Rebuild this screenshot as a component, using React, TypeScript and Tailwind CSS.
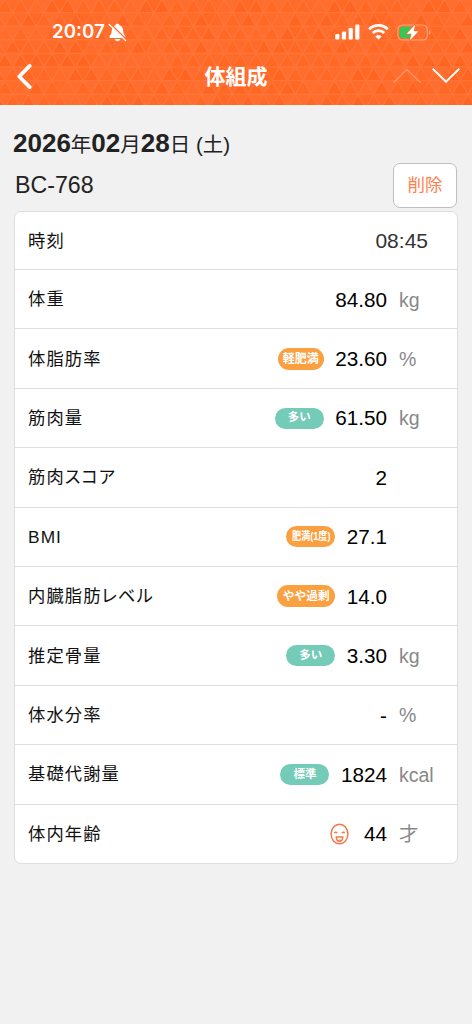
import { ReactNode } from 'react';
import clsx from 'clsx';

type Tone = 'orange' | 'green';

interface Badge {
    text: string;
    tone: Tone;
    size: string;
    textStyle?: string;
}

interface Measurement {
    label: string;
    value: string;
    unit?: string;
    badge?: Badge;
    face?: boolean;
}

const measurements: Measurement[] = [
    { label: '体重', value: '84.80', unit: 'kg' },
    { label: '体脂肪率', value: '23.60', unit: '%', badge: { text: '軽肥満', tone: 'orange', size: 'w-[46px] h-[22px]', textStyle: 'text-[12px]' } },
    { label: '筋肉量', value: '61.50', unit: 'kg', badge: { text: '多い', tone: 'green', size: 'w-[49px] h-[21px]' } },
    { label: '筋肉スコア', value: '2' },
    { label: 'BMI', value: '27.1', badge: { text: '肥満(1度)', tone: 'orange', size: 'w-[49px] h-[21px]', textStyle: 'text-[11px] scale-x-[0.83]' } },
    { label: '内臓脂肪レベル', value: '14.0', badge: { text: 'やや過剰', tone: 'orange', size: 'w-[58px] h-[22px]', textStyle: 'text-[11.7px]' } },
    { label: '推定骨量', value: '3.30', unit: 'kg', badge: { text: '多い', tone: 'green', size: 'w-[49px] h-[21px]' } },
    { label: '体水分率', value: '-', unit: '%' },
    { label: '基礎代謝量', value: '1824', unit: 'kcal', badge: { text: '標準', tone: 'green', size: 'w-[49px] h-[21px]' } },
    { label: '体内年齢', value: '44', unit: '才', face: true },
];

const SIDE = 15.7;
const ROW = 13.6;

function TrianglePattern() {
    const triangles: { points: string; fill: string }[] = [];
    for (let r = 0; r < 9; r++) {
        const top = r * ROW - 0.9;
        const shift = r % 2 === 0 ? 0 : SIDE / 2;
        for (let c = -1; c < 32; c++) {
            const x = c * SIDE + shift - 3;
            const shade = (r * 7 + c * 13 + ((r * c) % 5) + 40) % 6;
            triangles.push({
                points: `${x},${top + ROW} ${x + SIDE},${top + ROW} ${x + SIDE / 2},${top}`,
                fill: shade === 0 ? '#ff6c2b' : shade < 3 ? '#ff6522' : '#ff6825',
            });
            triangles.push({
                points: `${x + SIDE / 2},${top} ${x + SIDE * 1.5},${top} ${x + SIDE},${top + ROW}`,
                fill: shade === 1 ? '#ff6825' : shade < 4 ? '#ff6e2f' : '#ff6b2a',
            });
        }
    }
    return (
        <svg className="absolute inset-0" width="472" height="105" aria-hidden="true">
            {triangles.map((t) => (
                <polygon key={t.points} points={t.points} fill={t.fill} stroke="#ff7537" strokeWidth="1.300" />
            ))}
        </svg>
    );
}

function BellOffIcon() {
    return (
        <svg width="19" height="19" viewBox="0 0 18 18">
            <path d="M9 .8c-1 0-1.700.5-1.800 1.300C4.800 2.900 3.700 4.900 3.600 7.200 3.500 10 2.900 11 1.700 12.200c-.8.800-.3 2 .8 2h13c1.100 0 1.600-1.200.8-2C15.100 11 14.500 10 14.400 7.200c-.1-2.300-1.200-4.300-3.600-5.100C10.700 1.300 10 .8 9 .8Z" fill="#fff" />
            <path d="M6.300 15.200h5.400c-.3 1.300-1.400 2-2.700 2s-2.400-.7-2.700-2Z" fill="#fff" />
            <path d="M2.700 1.100 17.400 15.500" stroke="#ff6c2b" strokeWidth="1.300" />
            <path d="M1.200 1.500 16.700 16.700" stroke="#fff" strokeWidth="1.300" strokeLinecap="round" />
        </svg>
    );
}

function StatusBar() {
    return (
        <div className="flex h-[49px] items-end pr-[41px] pl-[52px]">
            <div className="flex h-[34px] flex-1 items-center">
                <span className="pt-px font-['Inter','Liberation_Sans',sans-serif] text-[18.7px] font-semibold text-white">20:07</span>
                <span className="ml-[3px]"><BellOffIcon /></span>
            </div>
            <div className="flex h-[34px] items-center gap-[8px]">
                <svg width="25" height="17" viewBox="0 0 25 17" fill="#fff">
                    <rect x="0.200" y="10" width="4.200" height="5.500" rx="1.200" />
                    <rect x="6.900" y="7.500" width="4.200" height="8" rx="1.200" />
                    <rect x="13.600" y="4" width="4.200" height="11.500" rx="1.200" />
                    <rect x="20.200" y="0.500" width="4.200" height="15" rx="1.200" />
                </svg>
                <svg width="21" height="17" viewBox="0 0 21 17" fill="none" stroke="#fff" strokeWidth="2.700">
                    <path d="M1.200 5.200a13.400 13.400 0 0 1 18.600 0" />
                    <path d="M4.700 9a8.400 8.400 0 0 1 11.600 0" />
                    <path d="M10.500 15.600 7.400 12.400a4.500 4.500 0 0 1 6.200 0Z" fill="#fff" stroke="none" />
                </svg>
                <svg width="34" height="17" viewBox="0 0 34 17">
                    <rect x="0.900" y="1" width="29.500" height="15" rx="4.800" fill="none" stroke="#ffa27a" strokeWidth="1.200" />
                    <path d="M32 6v5c1-.3 1.600-1.300 1.600-2.500S33 6.300 32 6Z" fill="#ffa27a" />
                    <path d="M5.500 2.700H14v11.600H5.500a3 3 0 0 1-3-3V5.700a3 3 0 0 1 3-3Z" fill="#34c759" />
                    <path d="M18.300.500 9.700 9.800h4.800L12.800 16.500 21.500 7.200h-4.800Z" fill="#fff" stroke="#ff6c2b" strokeWidth="1.500" paintOrder="stroke" />
                </svg>
            </div>
        </div>
    );
}

function Header() {
    return (
        <header className="relative h-[105px] overflow-hidden bg-[#ff6a28]">
            <TrianglePattern />
            <div className="relative">
                <StatusBar />
                <div className="grid h-[56px] grid-cols-[1fr_auto_1fr] items-center pr-[12px] pl-[12px]">
                    <svg className="mb-[2px] ml-[4px]" width="16" height="27" viewBox="0 0 16 27" fill="none" stroke="#fff" strokeWidth="3.700" strokeLinecap="round" strokeLinejoin="round">
                        <path d="M13.700 2.900 3.200 13.500l10.500 10.600" />
                    </svg>
                    <h1 className="text-[21px] leading-[30px] font-bold text-white">体組成</h1>
                    <div className="flex items-center justify-end gap-[11px] pb-[4px]">
                        <svg width="28" height="15" viewBox="0 0 28 15" fill="none" stroke="#ff9565" strokeWidth="1.500">
                            <path d="m.5 14.500 13.500-13L27.500 14.500" />
                        </svg>
                        <svg width="28" height="15" viewBox="0 0 28 15" fill="none" stroke="#fff" strokeWidth="1.900">
                            <path d="m.700.700 13.300 13L27.300.700" />
                        </svg>
                    </div>
                </div>
            </div>
        </header>
    );
}

function StatusBadge({ badge }: { badge: Badge }) {
    return (
        <span
            className={clsx(
                'mr-[11.5px] flex items-center justify-center rounded-full',
                badge.size,
                badge.tone === 'orange' ? 'bg-[#faa040]' : 'bg-[#74cbb8]'
            )}
        >
            <span className={clsx('leading-none font-bold whitespace-nowrap text-white', badge.textStyle ?? 'text-[11.5px]')}>
                {badge.text}
            </span>
        </span>
    );
}

function FaceIcon() {
    return (
        <svg className="mr-[15px]" width="19" height="22" viewBox="0 0 19 22" fill="none" stroke="#ee7b4b" strokeWidth="1.500">
            <ellipse cx="9.500" cy="11" rx="8.400" ry="9.800" />
            <path d="M4.300 9.900c.7-.8 2.200-.8 2.900 0M11.800 9.900c.7-.8 2.200-.8 2.900 0" />
            <path d="M6.300 14h6.400c0 2.800-1.300 4.400-3.200 4.400S6.300 16.800 6.300 14Z" />
            <path d="M7.900 17.600c.6-.8 2.600-.8 3.200 0" strokeWidth="1.200" />
        </svg>
    );
}

function Row({ label, className, children }: { label: string; className?: string; children: ReactNode }) {
    return (
        <div className={clsx('flex items-center border-b border-[#dedede] pl-[13px] last:border-b-0', className ?? 'min-h-0 flex-1')}>
            <span className="flex-1 pt-[2px] [font-feature-settings:'palt'] text-[17.3px] tracking-[1.1px] text-[#111]">{label}</span>
            {children}
        </div>
    );
}

export default function App() {
    return (
        <div className="min-h-screen bg-[#f1f1f1] font-['Liberation_Sans','Noto_Sans_CJK_JP',sans-serif]">
            <Header />
            <main className="px-[14px] pt-[22px]">
                <h2 className="-ml-px flex h-[32px] items-baseline text-[20.5px] leading-[32px] whitespace-pre text-[#222]">
                    <b className="text-[26px]">2026</b>年<b className="text-[26px]">02</b>月<b className="text-[26px]">28</b>日 (土)
                </h2>
                <div className="flex h-[52px] items-center justify-between pr-px pl-px">
                    <span className="pt-px text-[23.2px] text-[#222]">BC-768</span>
                    <button className="h-[45px] w-[64px] rounded-[7px] border border-[#bfbfbf] bg-white text-[17.5px] text-[#ff7f4c]">
                        削除
                    </button>
                </div>
                <section className="flex h-[653px] flex-col rounded-[7px] border border-[#dedede] bg-white">
                    <Row label="時刻" className="h-[58px]">
                        <span className="pr-[29px] text-[21px] text-[#333]">08:45</span>
                    </Row>
                    {measurements.map((m) => (
                        <Row key={m.label} label={m.label}>
                            {m.badge && <StatusBadge badge={m.badge} />}
                            {m.face && <FaceIcon />}
                            <span className="text-[20.7px] text-black">{m.value}</span>
                            <span className="w-[70px] pt-[2px] pl-[12px] text-[19.5px] text-[#888]">{m.unit}</span>
                        </Row>
                    ))}
                </section>
            </main>
        </div>
    );
}
